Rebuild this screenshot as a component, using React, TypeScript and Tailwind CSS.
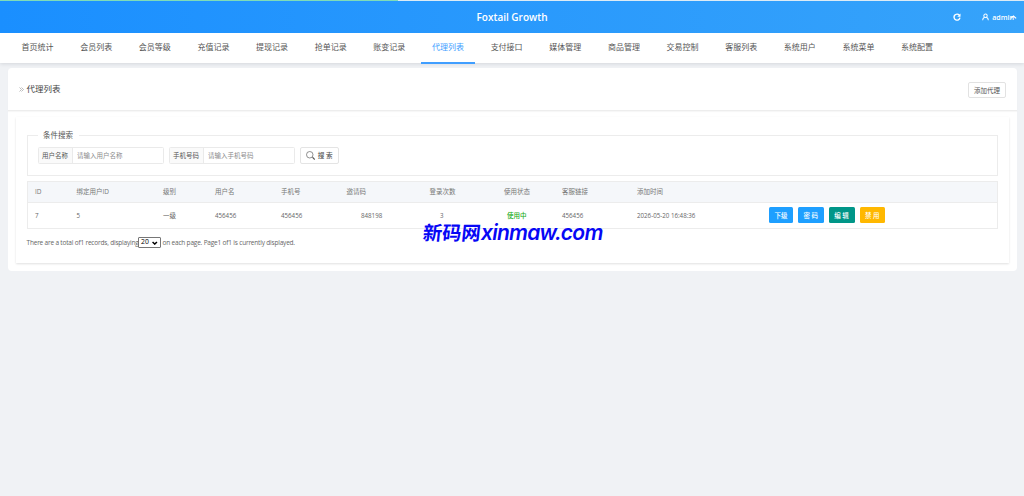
import React from "react";

const navItems = [
  "首页统计", "会员列表", "会员等级", "充值记录", "提现记录", "抢单记录", "账变记录", "代理列表",
  "支付接口", "媒体管理", "商品管理", "交易控制", "客服列表", "系统用户", "系统菜单", "系统配置",
];

const columns = ["ID", "绑定用户ID", "级别", "用户名", "手机号", "邀请码", "登录次数", "使用状态", "客服链接", "添加时间", ""];

const rowGrid =
  "grid grid-cols-[41.5px_86.5px_52px_66px_65.5px_83px_74.5px_58px_75px_132px_1fr] items-center pl-[7.5px] whitespace-nowrap";

const actions = [
  { label: "下级", style: "w-[24px] bg-[#1e9fff]" },
  { label: "密 码", style: "w-[25.5px] bg-[#1e9fff]" },
  { label: "编 辑", style: "w-[26px] bg-[#009688]" },
  { label: "禁 用", style: "w-[25.5px] bg-[#ffb800]" },
];

function Field({ label, placeholder }: { label: string; placeholder: string }) {
  return (
    <div className="flex h-[17.5px] w-[126px] items-stretch rounded-[1.5px] border border-[#eaeaea] text-[6.5px]">
      <div className="flex w-[34px] items-center justify-center border-r border-[#eaeaea] bg-[#fafafa] pt-[1px] text-[#555]">{label}</div>
      <input
        placeholder={placeholder}
        className="min-w-0 flex-1 bg-transparent pt-[1px] pl-[4.5px] outline-none placeholder:text-[#8c8c8c]"
      />
    </div>
  );
}

function Header() {
  return (
    <header className="relative h-[33px] bg-linear-to-r from-[#1a8fff] to-[#36a3fa]">
      <div className="h-px bg-[#dcebf5]">
        <div className="h-px w-[398px] bg-[#7fdcb8]" />
      </div>
      <div className="grid h-[32px] grid-cols-[1fr_auto_1fr] items-center text-white">
        <span />
        <h1 className="pt-[1px] text-[10px] font-semibold">Foxtail Growth</h1>
        <div className="flex items-center justify-end pt-[1px] pr-[7px]">
          <svg viewBox="0 0 16 16" className="mr-[21px] h-[8px] w-[8px]" fill="none" stroke="currentColor" strokeWidth="2.8">
            <path d="M12.7 4.3A6 6 0 1 0 14 9.4" />
            <path d="M15 1v6.5H8.5z" fill="currentColor" stroke="none" />
          </svg>
          <svg viewBox="0 0 16 16" className="mr-[3px] h-[8px] w-[7px]" fill="none" stroke="currentColor" strokeWidth="2.3">
            <circle cx="8" cy="5" r="3.9" />
            <path d="M1.5 15.5c0-4 2-6 4.5-7M14.5 15.5c0-4-2-6-4.5-7" />
          </svg>
          <span className="text-[7.1px] font-semibold">admin</span>
          <svg viewBox="0 0 10 6" className="-ml-[4px] h-[4px] w-[7px]" fill="none" stroke="currentColor" strokeWidth="1.8">
            <path d="M1 5l4-3.5L9 5" />
          </svg>
        </div>
      </div>
    </header>
  );
}

export default function App() {
  return (
    <div className="h-[496px] w-[1024px] overflow-hidden bg-[#f0f2f5] font-['Open_Sans','Noto_Sans_CJK_SC',sans-serif] text-[#666]">
      <Header />
      <nav className="flex h-[29.5px] gap-[5px] bg-white pl-[10.7px] shadow-[0_1px_4px_rgba(0,21,41,0.12)]">
        {navItems.map((item) => (
          <a
            key={item}
            className={
              item === "代理列表"
                ? "flex h-[30.5px] w-[53.65px] shrink-0 items-center justify-center border-b-2 border-[#409eff] text-[8px] text-[#409eff]"
                : "flex h-[30.5px] w-[53.65px] shrink-0 items-center justify-center border-b-2 border-transparent text-[8px] text-[#555]"
            }
          >
            {item}
          </a>
        ))}
      </nav>

      <main className="mx-[8px] mt-[5.5px] h-[203px] w-[1008.5px] rounded-[4px] bg-white">
        <div className="flex h-[43px] items-center justify-between border-b border-[#ededed] pr-[10.5px] pl-[10.5px] shadow-[0_1px_1px_rgba(0,0,0,0.03)]">
          <h2 className="flex items-center gap-[3px] text-[8.5px] text-[#444]">
            <svg viewBox="0 0 10 10" className="h-[5px] w-[5px]" fill="none" stroke="#999" strokeWidth="1.3">
              <path d="M1 1l4 4-4 4M5 1l4 4-4 4" />
            </svg>
            代理列表
          </h2>
          <button className="mt-[2px] h-[16.5px] w-[38px] rounded-[2px] border border-[#e2e2e2] pt-[1px] text-[6.5px] text-[#555]">添加代理</button>
        </div>

        <section className="mr-[8px] ml-[8px] mt-[6px] h-[146px] px-[10.5px] pt-[12.5px] shadow-[0_1px_2px_rgba(0,0,0,0.12)]">
          <fieldset className="h-[46px] border border-[#ececec] pl-[10px]">
            <legend className="ml-0 px-[5.5px] text-[7.5px] leading-[11px] text-[#555]">条件搜索</legend>
            <div className="mt-[6px] flex gap-[5px]">
              <Field label="用户名称" placeholder="请输入用户名称" />
              <Field label="手机号码" placeholder="请输入手机号码" />
              <button className="flex h-[17.5px] w-[39.5px] items-center justify-center gap-[3px] rounded-[2px] border border-[#e4e4e4] text-[6.6px] font-medium text-[#555]">
                <svg viewBox="0 0 18 18" className="h-[9px] w-[9px]" fill="none" stroke="#555" strokeWidth="1.3">
                  <circle cx="7.5" cy="7.5" r="6.5" />
                  <path d="M13 12.5l4.5 4.5" strokeWidth="2.2" />
                </svg>
                <span className="pt-[1px]">搜 索</span>
              </button>
            </div>
          </fieldset>

          <div className="mt-[5px] border border-[#ececec] text-[6.5px]">
            <div className={`${rowGrid} h-[21px] border-b border-[#ececec] bg-[#f5f7fa] text-[#777]`}>
              {columns.map((column) => (
                <span key={column}>{column}</span>
              ))}
            </div>
            <div className={`${rowGrid} h-[25.5px] text-[6.2px]`}>
              <span className="pt-[1px]">7</span>
              <span className="pt-[1px]">5</span>
              <span className="pt-[1px] text-[6.5px]">一级</span>
              <span className="pt-[1px]">456456</span>
              <span className="pt-[1px]">456456</span>
              <span className="pt-[1px] pl-[14.5px]">848198</span>
              <span className="pt-[1px] pl-[10.5px]">3</span>
              <span className="pt-[1px] pl-[3px] text-[6.5px] font-medium text-[#1aad19]">使用中</span>
              <span className="pt-[1px]">456456</span>
              <span className="pt-[1px]">2026-05-20 16:48:36</span>
              <div className="flex gap-[5px]">
                {actions.map((action) => (
                  <button key={action.label} className={`${action.style} h-[16px] rounded-[1.5px] pt-[1px] text-[6.5px] font-medium text-white`}>
                    {action.label}
                  </button>
                ))}
              </div>
            </div>
          </div>

          <div className="mt-[7px] flex h-[13px] items-center text-[6.5px] tracking-[-0.19px] whitespace-nowrap">
            <span className="w-[111.5px]">There are a total of1 records, displaying</span>
            <div className="flex h-[11px] w-[22.5px] items-center justify-between rounded-[1px] border border-[#767676] bg-white pr-[2px] pl-[2px] text-[6.8px] tracking-normal text-black">
              20
              <svg viewBox="0 0 10 7" className="h-[4px] w-[5.5px]" fill="none" stroke="currentColor" strokeWidth="2.6">
                <path d="M1 1.5l4 4 4-4" />
              </svg>
            </div>
            <span className="ml-[2px]">on each page. Page1 of1 is currently displayed.</span>
          </div>
        </section>
      </main>

      <div className="absolute top-[221px] left-[423px] leading-[24px] whitespace-nowrap text-[#0707f5]">
        <div className="flex items-baseline">
          <span className="w-[58px] -skew-x-6 text-[19.3px] font-bold">新码网</span>
          <span className="font-['Inter','Open_Sans',sans-serif] text-[21px] font-semibold tracking-[-0.75px] italic">xinmaw.com</span>
        </div>
      </div>
    </div>
  );
}
